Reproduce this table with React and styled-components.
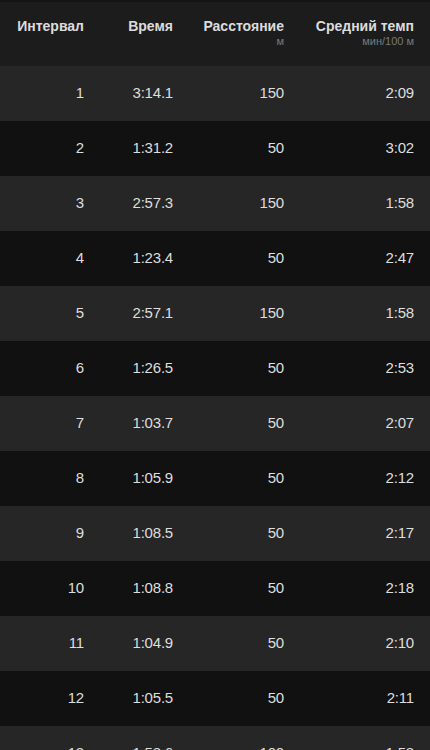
import React from "react";
import styled, { createGlobalStyle } from "styled-components";

const Global = createGlobalStyle`
  html, body { margin: 0; padding: 0; background: #111111; }
  body { font-family: "Liberation Sans", Arial, sans-serif; -webkit-font-smoothing: antialiased; }
`;

const Page = styled.div`
  width: 430px;
  height: 750px;
  overflow: hidden;
  background: #111111;
  border-top: 2px solid #141414;
  box-sizing: border-box;
`;

const Grid = styled.div`
  display: grid;
  grid-template-columns: 84px 89px 111px 130px;
  padding-right: 16px;
  box-sizing: border-box;
  width: 430px;
`;

const Header = styled(Grid)`
  height: 64px;
  background: #1c1c1c;
  align-items: start;
  padding-top: 16px;
`;

const HeadCell = styled.div`
  display: flex;
  flex-direction: column;
  align-items: flex-end;
  text-align: right;
`;

const HeadTitle = styled.span`
  font-size: 14px;
  font-weight: 700;
  color: #dcdcdc;
  line-height: 16px;
  white-space: nowrap;
`;

const HeadSub = styled.span`
  font-size: 11px;
  color: #7a7a7a;
  line-height: 12px;
  margin-top: 1px;
`;

const Row = styled(Grid)`
  height: 55px;
  align-items: center;
  padding-bottom: 2px;
  background: ${(p) => (p.$odd ? "#262626" : "#111111")};
`;

const Cell = styled.div`
  text-align: right;
  font-size: 15px;
  letter-spacing: -0.2px;
  color: #dedede;
  white-space: nowrap;
`;

const rows = [
  ["1", "3:14.1", "150", "2:09"],
  ["2", "1:31.2", "50", "3:02"],
  ["3", "2:57.3", "150", "1:58"],
  ["4", "1:23.4", "50", "2:47"],
  ["5", "2:57.1", "150", "1:58"],
  ["6", "1:26.5", "50", "2:53"],
  ["7", "1:03.7", "50", "2:07"],
  ["8", "1:05.9", "50", "2:12"],
  ["9", "1:08.5", "50", "2:17"],
  ["10", "1:08.8", "50", "2:18"],
  ["11", "1:04.9", "50", "2:10"],
  ["12", "1:05.5", "50", "2:11"],
  ["13", "1:58.6", "100", "1:58"],
];

const heads = [
  ["Интервал", ""],
  ["Время", ""],
  ["Расстояние", "м"],
  ["Средний темп", "мин/100 м"],
];

export default function App() {
  return (
    <>
      <Global />
      <Page>
        <Header>
          {heads.map(([t, s]) => (
            <HeadCell key={t}>
              <HeadTitle>{t}</HeadTitle>
              {s && <HeadSub>{s}</HeadSub>}
            </HeadCell>
          ))}
        </Header>
        {rows.map((r, i) => (
          <Row key={r[0]} $odd={i % 2 === 0}>
            {r.map((c, j) => (
              <Cell key={j}>{c}</Cell>
            ))}
          </Row>
        ))}
      </Page>
    </>
  );
}
